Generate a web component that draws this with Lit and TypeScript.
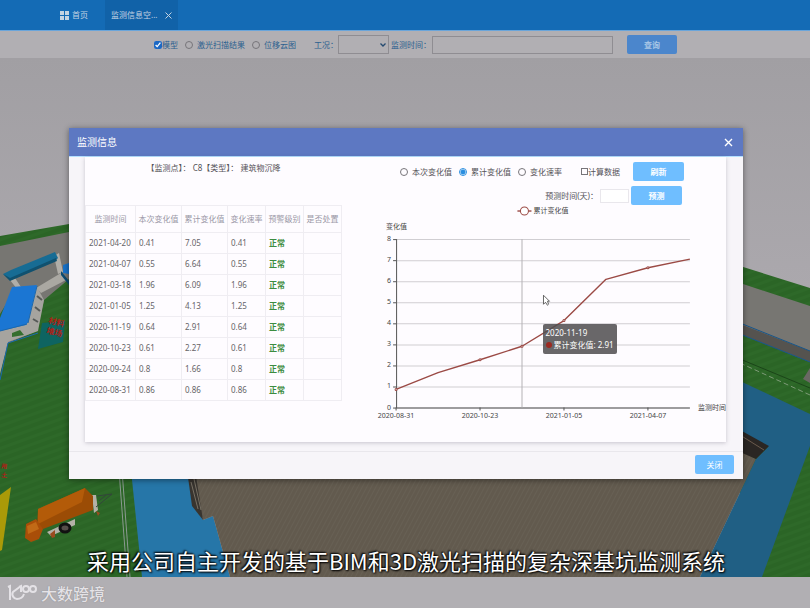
import { LitElement, html, svg, css } from "lit";
import { customElement, property, state } from "lit/decorators.js";

interface Reading {
  date: string;
  change: number;
  total: number;
  rate: number;
}

const READINGS: Reading[] = [
  { date: "2021-04-20", change: 0.41, total: 7.05, rate: 0.41 },
  { date: "2021-04-07", change: 0.55, total: 6.64, rate: 0.55 },
  { date: "2021-03-18", change: 1.96, total: 6.09, rate: 1.96 },
  { date: "2021-01-05", change: 1.25, total: 4.13, rate: 1.25 },
  { date: "2020-11-19", change: 0.64, total: 2.91, rate: 0.64 },
  { date: "2020-10-23", change: 0.61, total: 2.27, rate: 0.61 },
  { date: "2020-09-24", change: 0.8, total: 1.66, rate: 0.8 },
  { date: "2020-08-31", change: 0.86, total: 0.86, rate: 0.86 },
];

const FONT = css`"Noto Sans", "Noto Sans CJK SC", sans-serif`;

const controls = css`
  * {
    box-sizing: border-box;
  }
  button {
    font: 8px/19px ${FONT};
    height: 19px;
    padding: 0;
    border: 0;
    border-radius: 2px;
    color: #fff;
    background: #6fbeff;
  }
  label {
    display: flex;
    align-items: center;
  }
  input[type="radio"] {
    appearance: none;
    width: 8px;
    height: 8px;
    margin: 0 4px 0 0;
    border: 1px solid #77757a;
    border-radius: 50%;
    background: transparent;
  }
  input[type="radio"]:checked {
    border-color: #2b8fe0;
    background: radial-gradient(circle, #2b8fe0 2px, #fff 3px);
  }
`;

/* The 3D model view of the site. */
@customElement("site-scene")
export class SiteScene extends LitElement {
  static styles = css`
    :host {
      display: block;
      contain: size;
      overflow: hidden;
      background: #a4a2a6;
    }
    svg {
      display: block;
      width: 100%;
      height: 100%;
    }
    text {
      font: 700 8px ${FONT};
      fill: #ad2117;
    }
    .small {
      font-size: 6px;
    }
  `;

  render() {
    return html`<svg viewBox="0 58 810 519" preserveAspectRatio="xMidYMid slice" aria-hidden="true">
      <defs>
        <linearGradient id="sky" x1="0" y1="0" x2="0" y2="1">
          <stop offset="0" stop-color="#a19fa3" />
          <stop offset="1" stop-color="#aba8ad" />
        </linearGradient>
        <pattern id="grass" width="9" height="7" patternUnits="userSpaceOnUse" patternTransform="rotate(-20)">
          <rect width="9" height="7" fill="#2b6526" />
          <rect width="9" height="3" fill="#2e6929" />
        </pattern>
        <pattern id="soil" width="4" height="8" patternUnits="userSpaceOnUse" patternTransform="rotate(28)">
          <rect width="4" height="8" fill="#625a4e" />
          <rect width="1" height="8" fill="#676054" />
        </pattern>
      </defs>
      <rect y="58" width="810" height="230" fill="url(#sky)" />
      <path fill="#777672" d="M0 240L69 228V577H0ZM740 280L810 302V370H740Z" />
      <path fill="url(#grass)" d="M0 236L69 224V232L0 246ZM740 266L810 288V306L740 283Z" />
      <path fill="url(#grass)" d="M0 372L8 343L37 331L44 300L69 279V470H200V577H0Z" />
      <path fill="url(#grass)" d="M0 314L5 306L12 303L0 325ZM740 334L810 362V577H740Z" />

      <path fill="#aaa8a2" d="M36 288L61 273L66 280L41 293Z" />
      <path fill="#b0aea8" d="M10 280L15 278L21 287L17 289ZM54 256L59 253L63 272L58 274Z" />
      <path fill="#176c94" d="M3 274L11 270L55 252L58 258L56 260L10 280Z" />
      <path fill="#10516f" d="M3 274L10 278L56 258L57 261L10 281Z" />
      <path fill="#1872c9" d="M63 265L69 263V274L63 273Z" />
      <path fill="#0b4b72" d="M61 271L69 281V285L61 275Z" />
      <path fill="#a6a49f" d="M36 285L44 300L38 331L8 342L0 374V329L28 323Z" />
      <path fill="#1b76d3" d="M12 287L37 285L28 322L26 325L0 331V318Z" />
      <path fill="none" stroke="#1a68af" d="M28 323L37 286M0 331L27 324M0 380L8 343L38 333" />
      <path fill="#356e2f" d="M12 333L20 330L24 335L12 337Z" />
      <path fill="none" stroke="#575a58" stroke-width="2" d="M37 296L42 300M35 307L40 311M33 319L38 322" />
      <path fill="#0e6461" d="M42 323L65 321L63 342L38 349Z" />
      <text transform="translate(48 323) rotate(14)">材料</text>
      <text transform="translate(46 333) rotate(14)">堆场</text>

      <text class="small" transform="translate(1 468) rotate(6)">用</text>
      <text class="small" transform="translate(1 477) rotate(6)">土</text>
      <path fill="#aa9a08" d="M0 495L11 487L2 550L0 551Z" />

      <path fill="#2676a8" d="M131 470H187L203 520L213 516L230 577H142Z" />
      <path fill="url(#soil)" d="M190 470H740L743 452L756 459L700 577H230L213 516L203 520Z" />
      <path fill="#38342f" d="M187 470H195L203 520L192 506Z" />
      <path fill="none" stroke="#777064" d="M194 479L201 510M191 482L198 509" />
      <path fill="none" stroke="#8b9a91" d="M119 470L127 577M122 470L130 577" />
      <path fill="#205f84" d="M740 381L810 414V446L762 577H700L756 459L768 447L740 431Z" />
      <path fill="#2a2623" d="M740 430L769 446L756 459L740 452Z" />
      <path fill="none" stroke="#6b5b4d" d="M740 435L764 450" />
      <path fill="#55534f" d="M740 324L810 351V362L740 334Z" />
      <path fill="none" stroke="#17568b" d="M740 323L810 351M740 334L810 362" />
      <path fill="none" stroke="#1b4519" d="M740 359L810 388" />
      <path fill="none" stroke="#7e9b78" stroke-dasharray="5 3" d="M740 363L810 395" />
      <path fill="#6a6864" d="M810 368L803 379L810 383Z" />

      <path fill="#b4b1a8" d="M92 495H96L98 510L94 513Z" />
      <path fill="none" stroke="#33463a" d="M97 496L112 494L96 507M106 495L99 501" />
      <path fill="#b4b1a8" d="M47 532L75 519V525L51 536Z" />
      <ellipse cx="65" cy="528" rx="5" ry="4" fill="#554d49" stroke="#111" stroke-width="3" />
      <path fill="#9b4c05" d="M38 509L85 488L93 496V510L43 529L37 525Z" />
      <path fill="#b35b09" d="M38 509L85 488L82 502L38 524Z" />
      <path fill="#a94e08" d="M26 524L36 519L43 529L39 539L31 542L25 538Z" />
      <path fill="#c16a16" d="M27 526L36 522L39 529L28 534Z" />
      <path fill="#9a4b20" d="M50 534L55 530V537L52 538ZM96 511L100 513L98 516Z" />
    </svg>`;
  }
}

/* Line chart of one measured value against the monitoring date. */
@customElement("trend-chart")
export class TrendChart extends LitElement {
  @property({ attribute: false }) readings: Reading[] = [];
  @property({ type: Number }) active = 0;

  static styles = css`
    :host {
      display: block;
      position: relative;
      color: #444;
    }
    svg {
      display: block;
      width: 100%;
    }
    text {
      font: 7px ${FONT};
      fill: #444;
    }
    .end {
      text-anchor: end;
    }
    .mid {
      text-anchor: middle;
    }
    .grid {
      stroke: #d0ced2;
    }
    .axis {
      stroke: #555;
      fill: none;
    }
    .pointer {
      stroke: #b3b1b5;
    }
    .line {
      stroke: #9b4a45;
      fill: none;
      stroke-width: 1.4;
      stroke-linejoin: round;
    }
    .dot {
      stroke: #9b4a45;
      fill: #fff;
    }
    .tip {
      position: absolute;
      left: 48.6%;
      top: 52.2%;
      padding: 3px;
      border-radius: 2px;
      font: 8px/12px ${FONT};
      color: #fff;
      white-space: nowrap;
      background: rgba(80, 78, 80, 0.86);
    }
    .bullet {
      display: inline-block;
      width: 6px;
      height: 6px;
      margin-right: 2px;
      border-radius: 50%;
      background: #9c2a22;
    }
  `;

  render() {
    const left = 27;
    const right = 320;
    const base = 204;
    const unit = 21;
    const step = (right - left) / (this.readings.length - 1);
    const px = (i: number) => left + i * step;
    const py = (v: number) => base - v * unit;
    const line = this.readings.map((r, i) => `${px(i)},${py(r.total)}`).join(" ");
    const current = this.readings[this.active];
    return html`
      <svg viewBox="0 2 356 228" role="img" aria-label="累计变化值">
        <path class="line" d="M148 8H162" />
        <circle class="dot" cx="155" cy="8" r="4" />
        <text x="164" y="10">累计变化值</text>
        <text x="17" y="26">变化值</text>
        ${[0, 1, 2, 3, 4, 5, 6, 7, 8].map(
          (v) => svg`
            <path class="grid" d="M${left} ${py(v) + 0.5}H${right}" />
            <path class="axis" d="M${left - 3} ${py(v) + 0.5}H${left}" />
            <text class="end" x="22" y=${py(v) + 2}>${v}</text>`
        )}
        <path class="axis" d="M${left + 0.5} ${py(8)}V${base + 0.5}H${right}" />
        ${this.readings.map((r, i) =>
          i % 2 === 0
            ? svg`<path class="axis" d="M${px(i)} ${base}V${base + 3}" />
                <text class="mid" x=${px(i)} y=${base + 10}>${r.date}</text>`
            : null
        )}
        <path class="pointer" d="M${px(this.active)} ${py(8)}V${base}" />
        <polyline class="line" points=${line} />
        ${this.readings.map((r, i) =>
          i % 2 === 0 || i === this.active
            ? svg`<circle class="dot" cx=${px(i)} cy=${py(r.total)} r="1" />`
            : null
        )}
        <text x="328" y="206">监测时间</text>
        <path
          d="M174 92V101L176 99L178 102L179 101L178 98H180Z"
          fill="#fff" stroke="#444" stroke-width="0.8" />
      </svg>
      <div class="tip">
        <div>${current.date}</div>
        <div><span class="bullet"></span>累计变化值: ${current.total}</div>
      </div>
    `;
  }
}

@customElement("reading-table")
export class ReadingTable extends LitElement {
  @property({ attribute: false }) readings: Reading[] = [];

  static styles = css`
    table {
      width: 100%;
      table-layout: fixed;
      border-collapse: collapse;
      font: 8px/12px ${FONT};
      color: #666468;
    }
    th,
    td {
      box-sizing: border-box;
      height: 21px;
      padding: 0 0 0 3px;
      border: 1px solid #efedf2;
      text-align: left;
      font-weight: 400;
      white-space: nowrap;
    }
    th {
      height: 27px;
      padding: 0;
      text-align: center;
      color: #9a98a6;
    }
    .ok {
      font-weight: 700;
      color: #3c8c40;
    }
    .c1 {
      width: 50px;
    }
    .c2,
    .c3 {
      width: 46px;
    }
  `;

  render() {
    return html`<table>
      <colgroup>
        <col class="c1" /><col class="c2" /><col class="c3" /><col /><col /><col />
      </colgroup>
      <thead>
        <tr>
          ${["监测时间", "本次变化值", "累计变化值", "变化速率", "预警级别", "是否处置"].map(
            (h) => html`<th scope="col">${h}</th>`
          )}
        </tr>
      </thead>
      <tbody>
        ${this.readings.map(
          (r) => html`<tr>
            <td>${r.date}</td>
            <td>${r.change}</td>
            <td>${r.total}</td>
            <td>${r.rate}</td>
            <td class="ok">正常</td>
            <td></td>
          </tr>`
        )}
      </tbody>
    </table>`;
  }
}

@customElement("monitor-dialog")
export class MonitorDialog extends LitElement {
  @state() private series = "累计变化值";

  static styles = [
    controls,
    css`
      :host {
        display: block;
        font: 8px/12px ${FONT};
        color: #555358;
        background: #f7f5f9;
        box-shadow: 0 1px 6px rgba(0, 0, 0, 0.45);
      }
      header {
        display: flex;
        align-items: center;
        justify-content: space-between;
        height: 29px;
        padding: 0 10px 0 8px;
        border-bottom: 1px solid #b4e0ff;
        color: #fff;
        background: #5d78c2;
      }
      h2 {
        margin: 0;
        font: 10px/14px ${FONT};
      }
      .close {
        display: flex;
        align-items: center;
        height: 10px;
        background: none;
      }
      .close svg {
        width: 9px;
        height: 9px;
      }
      .card {
        display: grid;
        grid-template-columns: 257px 1fr;
        column-gap: 27px;
        margin: 0 17px 9px 16px;
        min-height: 285px;
        background: #fefcff;
        box-shadow: 0 1px 4px rgba(60, 50, 80, 0.25);
      }
      .caption {
        margin: 5px 0 31px;
        text-align: center;
      }
      .row {
        display: flex;
        align-items: center;
        justify-content: flex-end;
        height: 19px;
        padding-right: 44px;
      }
      .first {
        margin: 5px 0;
        padding-right: 42px;
      }
      .radios {
        display: flex;
        gap: 7px;
        margin-right: 19px;
      }
      .first input[type="checkbox"] {
        appearance: none;
        width: 7px;
        height: 7px;
        margin: 0;
        border: 1px solid #77757a;
      }
      .days {
        width: 29px;
        height: 14px;
        margin: 0 2px;
        border: 1px solid #e9e7ec;
        background: #fff;
      }
      .act {
        width: 51px;
        font-weight: 700;
      }
      .first .act {
        margin-left: 13px;
      }
      footer {
        display: flex;
        justify-content: flex-end;
        padding: 3px 9px 5px;
        border-top: 1px solid #e9e7ec;
      }
      .done {
        width: 39px;
      }
    `,
  ];

  render() {
    return html`
      <header>
        <h2>监测信息</h2>
        <button class="close" aria-label="关闭窗口">
          <svg viewBox="0 0 9 9"><path d="M1 1L8 8M8 1L1 8" stroke="#fff" stroke-width="1.4" /></svg>
        </button>
      </header>
      <div class="card">
        <section>
          <p class="caption">【监测点】：&nbsp;C8【类型】：&nbsp;建筑物沉降</p>
          <reading-table .readings=${READINGS}></reading-table>
        </section>
        <section>
          <div class="row first">
            <div class="radios">
              ${["本次变化值", "累计变化值", "变化速率"].map(
                (name) => html`<label
                  ><input
                    type="radio"
                    name="series"
                    .checked=${this.series === name}
                    @change=${() => (this.series = name)}
                  />${name}</label
                >`
              )}
            </div>
            <label><input type="checkbox" />计算数据</label>
            <button class="act">刷新</button>
          </div>
          <div class="row">
            <label for="days">预测时间(天)：</label>
            <input class="days" id="days" />
            <button class="act">预测</button>
          </div>
          <trend-chart .readings=${[...READINGS].reverse()} active="3"></trend-chart>
        </section>
      </div>
      <footer><button class="done">关闭</button></footer>
    `;
  }
}

@customElement("app-root")
export class AppRoot extends LitElement {
  static styles = [
    controls,
    css`
      :host {
        display: grid;
        grid-template-columns: minmax(0, 1fr);
        grid-template-rows: 31px 27px 1fr 31px;
        position: relative;
        min-height: 100vh;
        overflow: hidden;
        font: 8px/12px ${FONT};
      }
      .tabs {
        display: flex;
        padding-left: 60px;
        border-bottom: 1px solid #6aa5da;
        background: #146bb5;
      }
      .tabs a {
        display: flex;
        align-items: center;
        color: #c3d3e2;
        text-decoration: none;
      }
      .home {
        gap: 3px;
        width: 45px;
      }
      .home svg {
        width: 9px;
        height: 9px;
        fill: #c3d3e2;
      }
      .tab {
        display: flex;
        align-items: center;
        gap: 8px;
        padding: 0 6px;
        background: #1162a8;
      }
      .tab button {
        display: flex;
        align-items: center;
        background: none;
      }
      .tab svg {
        width: 7px;
        height: 7px;
      }
      .filters {
        display: flex;
        align-items: center;
        padding: 0 133px 0 154px;
        color: #2b608f;
        white-space: nowrap;
        background: #b1afb3;
      }
      .modes {
        display: flex;
        gap: 7px;
        margin-right: 18px;
      }
      .modes input[type="checkbox"] {
        width: 8px;
        height: 8px;
        margin: 0;
        accent-color: #1c68c4;
      }
      .filters select {
        appearance: none;
        width: 51px;
        height: 19px;
        border: 1px solid #8f8d92;
        border-radius: 0;
        background: transparent;
      }
      .pick {
        display: grid;
        align-items: center;
        margin: 0 2px 0 0;
      }
      .pick > * {
        grid-area: 1 / 1;
      }
      .pick svg {
        justify-self: end;
        width: 6px;
        height: 4px;
        margin-right: 3px;
        pointer-events: none;
      }
      .time {
        flex: 1;
        min-width: 0;
        height: 18px;
        margin: 0 14px 0 1px;
        border: 1px solid #8f8d92;
        background: transparent;
      }
      .query {
        width: 50px;
        color: #a9c6e6;
        font-weight: 700;
        background: #4b86cc;
      }
      .stage {
        display: grid;
        min-height: 440px;
      }
      .overlay {
        position: absolute;
        inset: 128px 67px auto 69px;
      }
      .subtitle {
        position: absolute;
        inset: auto 0 33px 2px;
        margin: 0;
        font: 22px/30px "Noto Sans CJK SC", sans-serif;
        text-align: center;
        white-space: nowrap;
        color: #fff;
        text-shadow: 0 0 2px #000, 1px 1px 2px #000, -1px -1px 2px #000;
      }
      .brand {
        display: flex;
        align-items: center;
        gap: 4px;
        padding-left: 7px;
        font: 500 16px/24px "Noto Sans CJK SC", sans-serif;
        color: #e4e2e6;
        text-shadow: 0 0 1px #77757a;
        background: #b1afb3;
      }
      .brand svg {
        width: 30px;
        height: 20px;
        fill: none;
        stroke: #e4e2e6;
        stroke-width: 2;
      }
    `,
  ];

  render() {
    return html`
      <nav class="tabs">
        <a class="home" href="#home">
          <svg viewBox="0 0 9 9"><path d="M0 0H4V4H0ZM5 0H9V4H5ZM0 5H4V9H0ZM5 5H9V9H5Z" /></svg>首页
        </a>
        <div class="tab">
          <a href="#monitor">监测信息空...</a>
          <button aria-label="关闭标签">
            <svg viewBox="0 0 7 7"><path d="M0.5 0.5L6.5 6.5M6.5 0.5L0.5 6.5" stroke="#c3d3e2" /></svg>
          </button>
        </div>
      </nav>
      <form class="filters">
        <div class="modes">
          <label><input type="checkbox" checked />模型</label>
          <label><input type="radio" name="mode" />激光扫描结果</label>
          <label><input type="radio" name="mode" />位移云图</label>
        </div>
        <label for="stage">工况：</label>
        <div class="pick">
          <select id="stage"></select>
          <svg viewBox="0 0 6 4"><path d="M0.5 0.5L3 3L5.5 0.5" fill="none" stroke="#244a70" stroke-width="1.3" /></svg>
        </div>
        <label for="time">监测时间：</label>
        <input class="time" id="time" />
        <button class="query" type="button">查询</button>
      </form>
      <main class="stage"><site-scene></site-scene></main>
      <footer class="brand">
        <svg viewBox="0 0 30 20" aria-hidden="true">
          <path d="M1 4L3 3V17M14 3L6 9C4 12 7 16 10 16C13 16 16 14 17 11M12 4L14 3V9" />
          <circle cx="19" cy="6" r="3" />
          <circle cx="26" cy="6" r="3" />
        </svg>
        <span>大数跨境</span>
      </footer>
      <monitor-dialog class="overlay" role="dialog" aria-label="监测信息"></monitor-dialog>
      <p class="subtitle">采用公司自主开发的基于BIM和3D激光扫描的复杂深基坑监测系统</p>
    `;
  }
}
